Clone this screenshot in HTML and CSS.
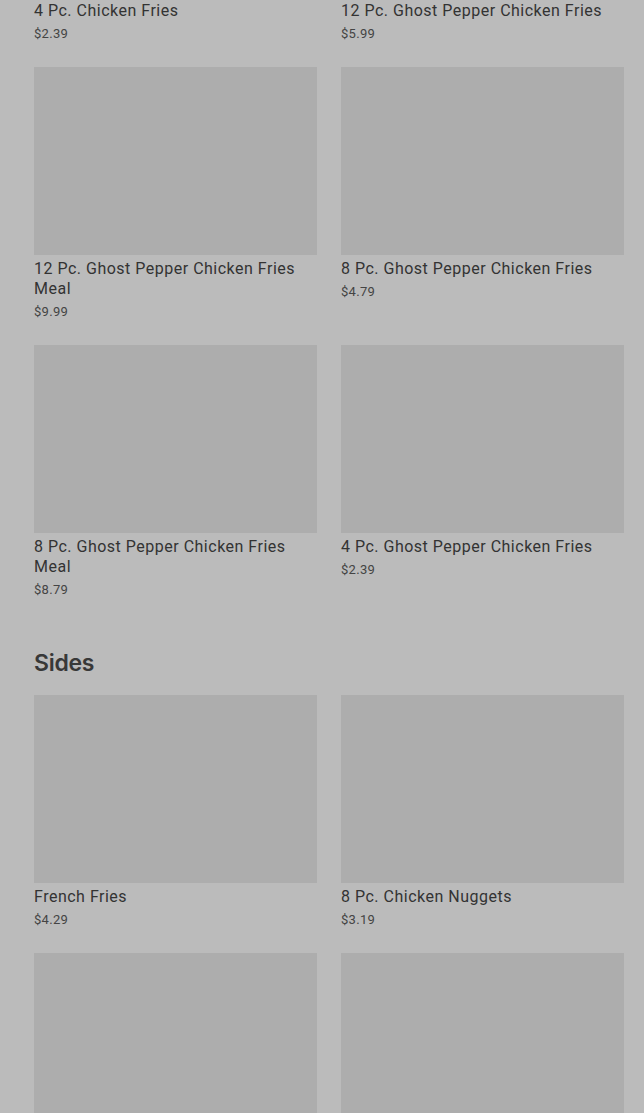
FILE: index.html
```html
<!DOCTYPE html>
<html>
<head>
<meta charset="UTF-8">
<title>Menu</title>
<link rel="stylesheet" href="styles.css">
</head>
<body>

<div id="wrapper">
	<div class="grid">
		<div class="item">
			<div class="pic"></div>
			<div class="name">4 Pc. Chicken Fries</div>
			<div class="price">$2.39</div>
		</div>
		<div class="item">
			<div class="pic"></div>
			<div class="name">12 Pc. Ghost Pepper Chicken Fries</div>
			<div class="price">$5.99</div>
		</div>
		<div class="item">
			<div class="pic"></div>
			<div class="name">12 Pc. Ghost Pepper Chicken Fries Meal</div>
			<div class="price">$9.99</div>
		</div>
		<div class="item">
			<div class="pic"></div>
			<div class="name">8 Pc. Ghost Pepper Chicken Fries</div>
			<div class="price">$4.79</div>
		</div>
		<div class="item">
			<div class="pic"></div>
			<div class="name">8 Pc. Ghost Pepper Chicken Fries Meal</div>
			<div class="price">$8.79</div>
		</div>
		<div class="item">
			<div class="pic"></div>
			<div class="name">4 Pc. Ghost Pepper Chicken Fries</div>
			<div class="price">$2.39</div>
		</div>
	</div>

	<h2 class="section">Sides</h2>

	<div class="grid">
		<div class="item">
			<div class="pic"></div>
			<div class="name">French Fries</div>
			<div class="price">$4.29</div>
		</div>
		<div class="item">
			<div class="pic"></div>
			<div class="name">8 Pc. Chicken Nuggets</div>
			<div class="price">$3.19</div>
		</div>
		<div class="item">
			<div class="pic"></div>
		</div>
		<div class="item">
			<div class="pic"></div>
		</div>
	</div>
</div>

</body>
</html>
```

FILE: styles.css
```css
html, body {
	margin: 0;
	background-color: #bbbbbb;
	overflow: hidden;
}
#wrapper {
	margin-top: -191px;
	padding: 0 20px 0 34px;
	font-family: Roboto, "Liberation Sans", sans-serif;
	color: #333333;
}
.grid {
	display: grid;
	grid-template-columns: 283px 283px;
	column-gap: 24px;
	row-gap: 24px;
}
.pic {
	height: 188px;
	background-color: #adadad;
}
.name {
	margin-top: 4px;
	font-size: 16px;
	line-height: 20px;
	letter-spacing: 0.5px;
}
.price {
	margin-top: 4px;
	font-size: 13px;
	line-height: 18px;
	letter-spacing: 0.3px;
	color: #444444;
}
.section {
	margin: 48px 0 16px;
	font-family: Inter, "Noto Sans", sans-serif;
	font-size: 23px;
	line-height: 32px;
	font-weight: 600;
	letter-spacing: -0.3px;
	color: #383838;
}
```
